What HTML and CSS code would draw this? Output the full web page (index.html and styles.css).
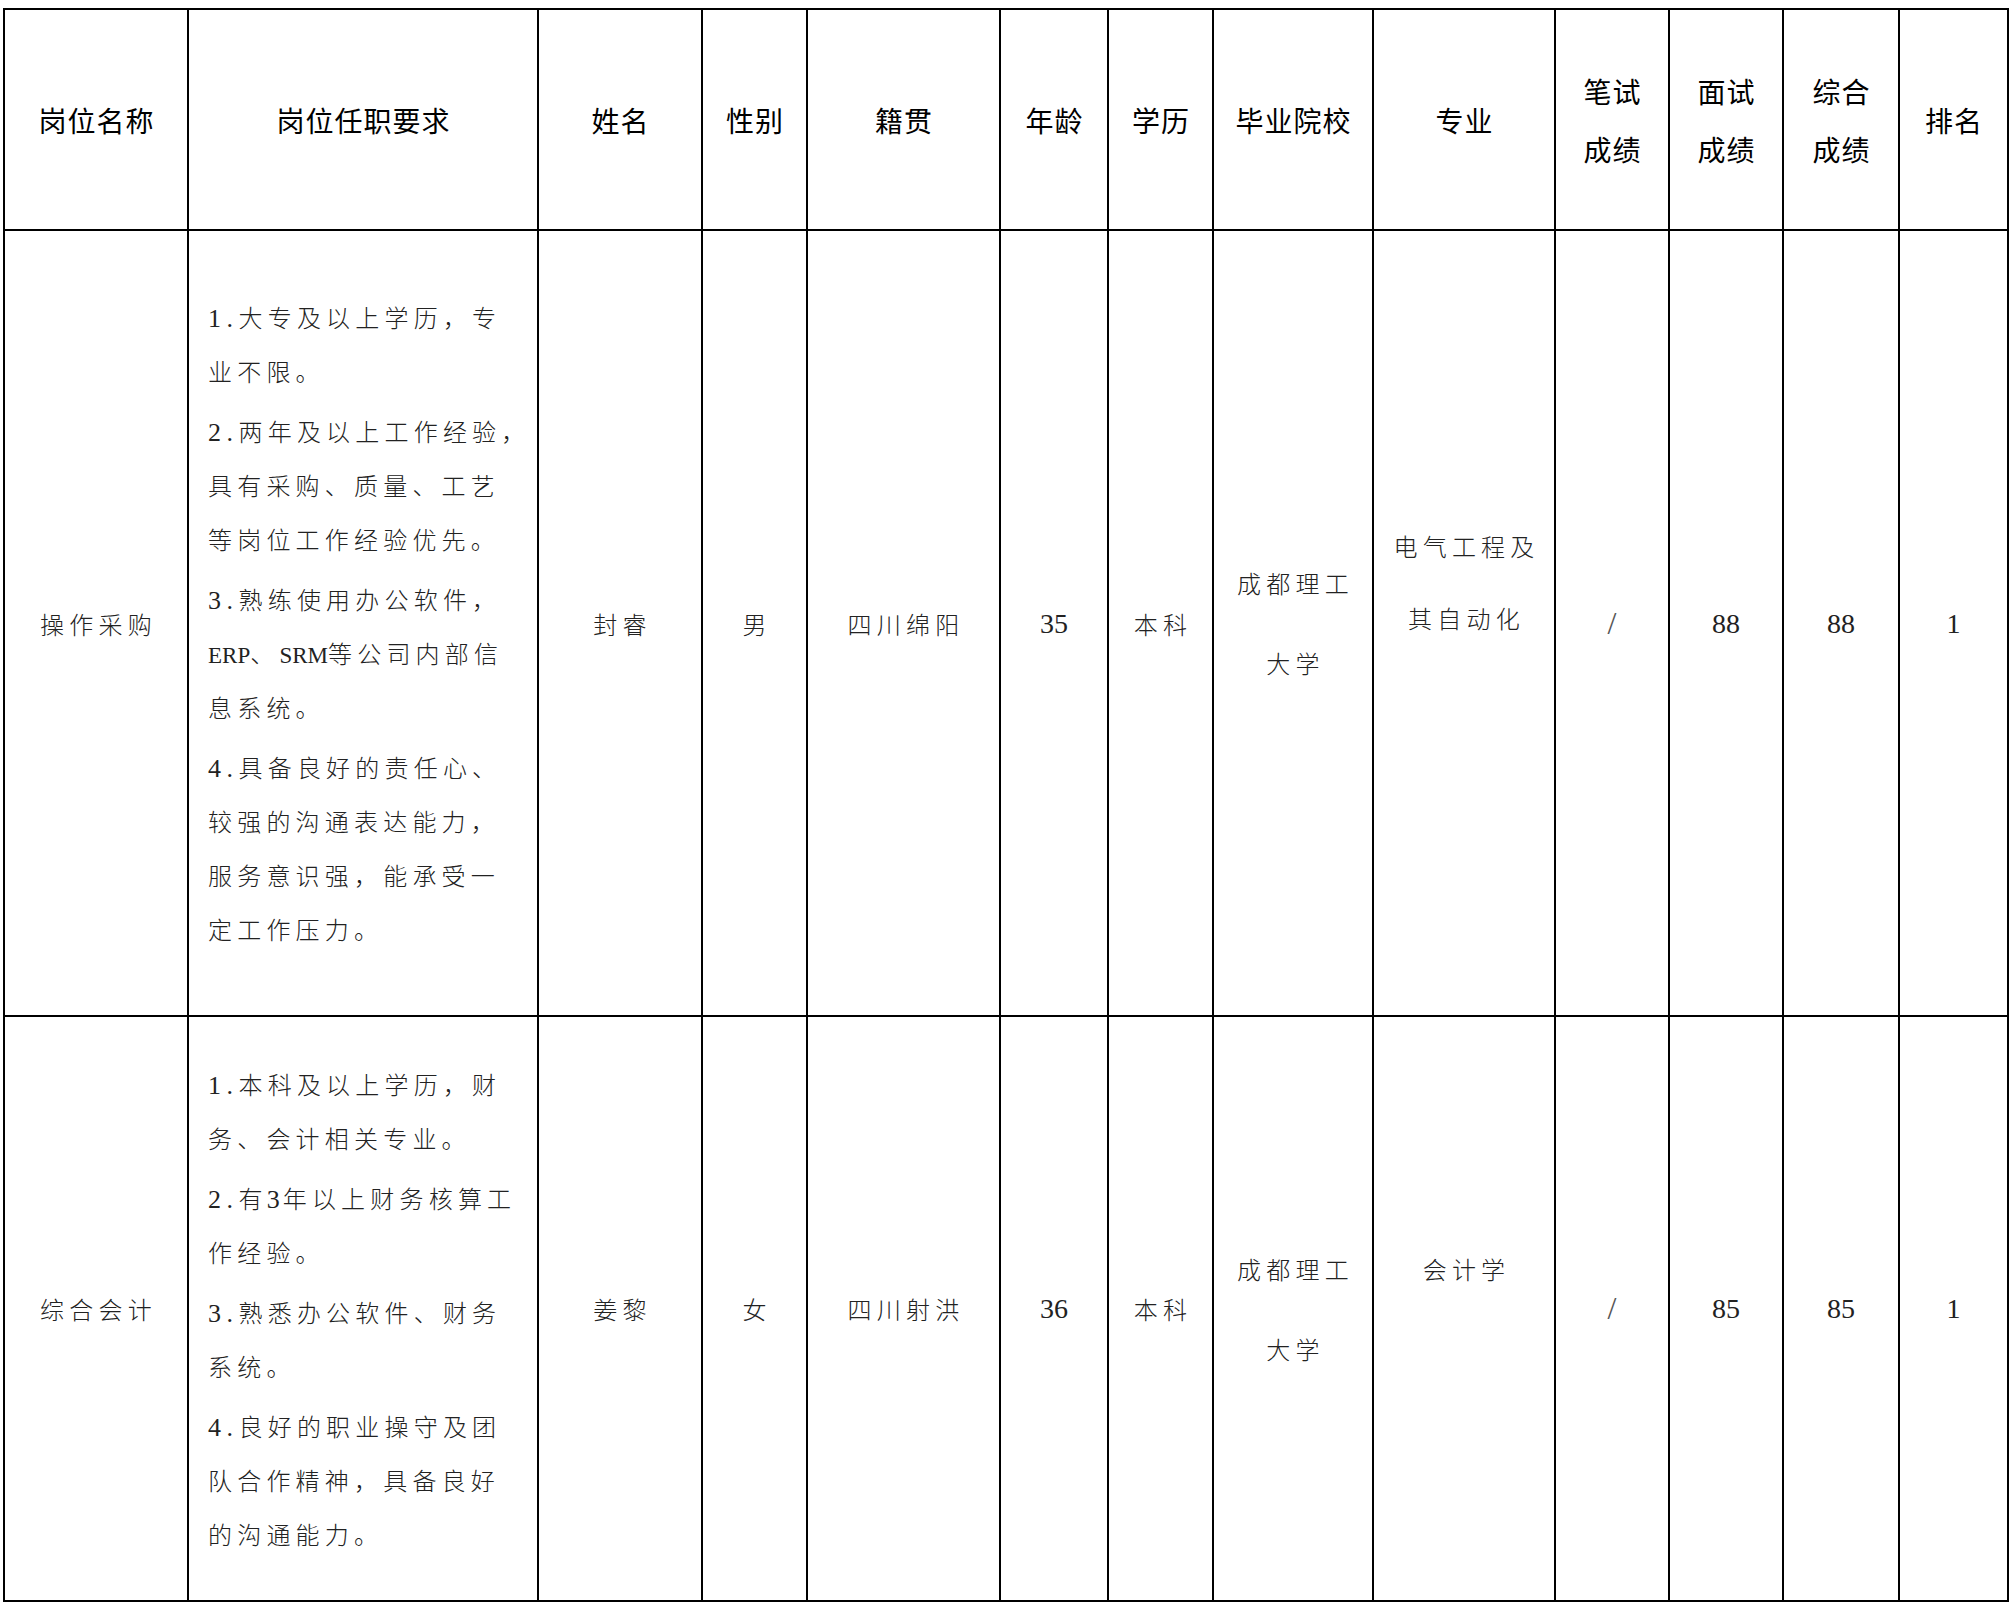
FILE: index.html
```html
<!DOCTYPE html>
<html lang="zh-CN">
<head>
<meta charset="utf-8">
<title>岗位招聘成绩表</title>
<link rel="stylesheet" href="styles.css">
</head>
<body>
<div class="page">
  <div class="sheet">
    <!-- header row -->
    <div class="cell hd">岗位名称</div>
    <div class="cell hd">岗位任职要求</div>
    <div class="cell hd">姓名</div>
    <div class="cell hd">性别</div>
    <div class="cell hd">籍贯</div>
    <div class="cell hd">年龄</div>
    <div class="cell hd">学历</div>
    <div class="cell hd">毕业院校</div>
    <div class="cell hd">专业</div>
    <div class="cell hd">笔试<br>成绩</div>
    <div class="cell hd">面试<br>成绩</div>
    <div class="cell hd">综合<br>成绩</div>
    <div class="cell hd">排名</div>

    <!-- row 1 -->
    <div class="cell bd">操作采购</div>
    <div class="cell bd req">
      <div class="req-body">
        <p><span class="n">1.</span>大专及以上学历，专<br>业不限。</p>
        <p><span class="n">2.</span>两年及以上工作经验，<br>具有采购、质量、工艺<br>等岗位工作经验优先。</p>
        <p><span class="n">3.</span>熟练使用办公软件，<br><span class="lat">ERP</span>、<span class="lat">SRM</span>等公司内部信<br>息系统。</p>
        <p><span class="n">4.</span>具备良好的责任心、<br>较强的沟通表达能力，<br>服务意识强，能承受一<br>定工作压力。</p>
      </div>
    </div>
    <div class="cell bd">封睿</div>
    <div class="cell bd">男</div>
    <div class="cell bd">四川绵阳</div>
    <div class="cell bd num">35</div>
    <div class="cell bd">本科</div>
    <div class="cell bd lh80">成都理工<br>大学</div>
    <div class="cell bd"><div class="major1">电气工程及<br>其自动化</div></div>
    <div class="cell bd slash">/</div>
    <div class="cell bd num">88</div>
    <div class="cell bd num">88</div>
    <div class="cell bd num">1</div>

    <!-- row 2 -->
    <div class="cell bd">综合会计</div>
    <div class="cell bd req">
      <div class="req-body">
        <p><span class="n">1.</span>本科及以上学历，财<br>务、会计相关专业。</p>
        <p><span class="n">2.</span>有<span class="lat d">3</span>年以上财务核算工<br>作经验。</p>
        <p><span class="n">3.</span>熟悉办公软件、财务<br>系统。</p>
        <p><span class="n">4.</span>良好的职业操守及团<br>队合作精神，具备良好<br>的沟通能力。</p>
      </div>
    </div>
    <div class="cell bd">姜黎</div>
    <div class="cell bd">女</div>
    <div class="cell bd">四川射洪</div>
    <div class="cell bd num">36</div>
    <div class="cell bd">本科</div>
    <div class="cell bd lh80">成都理工<br>大学</div>
    <div class="cell bd"><div class="major2">会计学</div></div>
    <div class="cell bd slash">/</div>
    <div class="cell bd num">85</div>
    <div class="cell bd num">85</div>
    <div class="cell bd num">1</div>
  </div>
</div>
</body>
</html>
```

FILE: styles.css
```css
html, body {
  margin: 0;
  padding: 0;
  background: #ffffff;
}

body {
  font-family: "Noto Sans CJK SC", "Noto Sans CJK JP", sans-serif;
  color: #000;
}

.page {
  padding: 8px 0 0 3px;
}

.sheet {
  display: grid;
  grid-template-columns: 184px 350px 164px 105px 193px 108px 105px 160px 182px 114px 114px 116px 109px;
  grid-template-rows: 221px 786px 585px;
  width: max-content;
  border-top: 2px solid #000;
  border-left: 2px solid #000;
}

.cell {
  box-sizing: border-box;
  border-right: 2px solid #000;
  border-bottom: 2px solid #000;
  display: flex;
  align-items: center;
  justify-content: center;
  text-align: center;
  white-space: nowrap;
}

.hd {
  font-size: 28px;
  line-height: 58px;
  letter-spacing: 1px;
  padding-left: 1px;
  color: #000;
}

.bd {
  font-size: 24px;
  line-height: 55px;
  letter-spacing: 5.2px;
  padding-left: 5px;
  color: #222;
  font-weight: 300;
}

.req {
  justify-content: flex-start;
  text-align: left;
  padding-left: 19px;
}

.req-body {
  line-height: 54px;
}

.req-body p {
  margin: 0;
}

.req-body p + p {
  margin-top: 6px;
}

.n {
  font-family: "Liberation Serif", serif;
  font-size: 26px;
  letter-spacing: 5.5px;
  line-height: 1;
}

.lat {
  font-family: "Liberation Serif", serif;
  font-size: 23px;
  letter-spacing: 0;
  line-height: 1;
}

.lat.d {
  font-size: 26px;
  letter-spacing: 3px;
  margin-left: -1px;
}

.num {
  font-family: "Liberation Serif", serif;
  font-size: 28px;
  letter-spacing: 0;
  padding-left: 0;
}

.slash {
  font-family: "Liberation Serif", serif;
  font-size: 32px;
  letter-spacing: 0;
  padding-left: 0;
  color: #555;
}

.lh80 {
  line-height: 80px;
}

.major1 {
  line-height: 72px;
  padding-bottom: 82px;
}

.major2 {
  line-height: 81px;
  padding-bottom: 81px;
}
```
